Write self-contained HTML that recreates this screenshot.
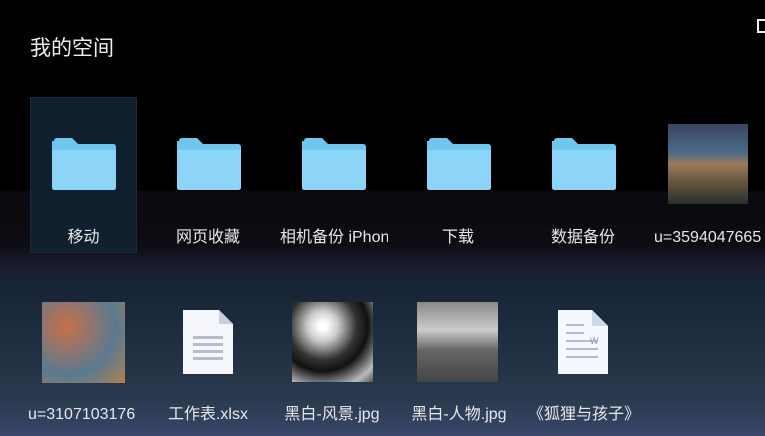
<!DOCTYPE html>
<html><head><meta charset="utf-8"><style>
body{margin:0;width:765px;height:436px;overflow:hidden;position:relative;font-family:"Liberation Sans","Noto Sans CJK SC",sans-serif;
background:linear-gradient(to bottom,#000 0px,#000 190px,#0a0a0f 192px,#0c0c12 245px,#1a1a2c 262px,#172436 285px,#1b2a3c 320px,#243446 370px,#2a3a4e 400px,#38466a 436px);}
.t{position:absolute;left:30px;top:32px;font-size:21px;color:#eee;}
.sel{position:absolute;left:30px;top:97px;width:107px;height:156px;background:#11202f;border:1px solid #1c2a38;box-sizing:border-box;}
.lbl{position:absolute;font-size:16px;color:#e8e8e8;white-space:nowrap;overflow:hidden;text-align:center;}
.f{position:absolute;width:64px;height:52px;}
.img{position:absolute;}
</style></head><body>
<div class="t">我的空间</div>
<div style="position:absolute;left:757px;top:19px;width:10px;height:14px;border:2px solid #eee;box-sizing:border-box"></div>
<div class="sel"></div>
<svg width="0" height="0" style="position:absolute"><defs>
<symbol id="fd" viewBox="0 0 64 52"><path d="M2 3 Q2 0 5 0 H20 L26 6 H61 Q64 6 64 9 V49 Q64 52 61 52 H3 Q0 52 0 49 V3Z" fill="#6fc6ef"/><path d="M0 12 H64 V49 Q64 52 61 52 H3 Q0 52 0 49Z" fill="#8dd5f8"/></symbol>
</defs></svg>
<svg class="f" style="left:52px;top:138px"><use href="#fd"/></svg>
<svg class="f" style="left:177px;top:138px"><use href="#fd"/></svg>
<svg class="f" style="left:302px;top:138px"><use href="#fd"/></svg>
<svg class="f" style="left:427px;top:138px"><use href="#fd"/></svg>
<svg class="f" style="left:552px;top:138px"><use href="#fd"/></svg>
<div class="img" style="left:668px;top:124px;width:80px;height:80px;background:linear-gradient(#3a4560 0%,#4a6a88 35%,#9a7a5a 50%,#6a5a40 70%,#2a2e30 100%)"></div>
<div class="lbl" style="left:30px;top:223px;width:107px">移动</div>
<div class="lbl" style="left:158px;top:223px;width:100px">网页收藏</div>
<div class="lbl" style="left:280px;top:223px;width:108px;text-align:left">相机备份 iPhone</div>
<div class="lbl" style="left:408px;top:223px;width:100px">下载</div>
<div class="lbl" style="left:533px;top:223px;width:100px">数据备份</div>
<div class="lbl" style="left:654px;top:229px;width:111px;text-align:left">u=3594047665</div>

<div class="img" style="left:42px;top:302px;width:83px;height:81px;background:radial-gradient(circle at 30% 30%,#c8704a,#5a7a90 60%,#b08050)"></div>
<svg class="img" style="left:183px;top:310px" width="50" height="64"><path d="M0 0H36L50 14V64H0Z" fill="#f4f6fb"/><path d="M36 0V14H50Z" fill="#c8d0e0"/><g fill="#b8bcc8"><rect x="10" y="26" width="30" height="3"/><rect x="10" y="33" width="30" height="3"/><rect x="10" y="40" width="30" height="3"/><rect x="10" y="47" width="30" height="3"/></g></svg>
<div class="img" style="left:292px;top:302px;width:81px;height:80px;background:radial-gradient(circle at 38% 30%,#fff 5%,#ccc 20%,#333 45%,#111 60%,#bbb 85%,#555)"></div>
<div class="img" style="left:417px;top:302px;width:81px;height:80px;background:linear-gradient(#888,#ccc 35%,#666 60%,#444)"></div>
<svg class="img" style="left:558px;top:310px" width="50" height="64"><path d="M0 0H34L50 16V64H0Z" fill="#f4f8ff"/><path d="M34 0V16H50Z" fill="#cdd8ec"/><g fill="#bbbbc4"><rect x="8" y="14" width="18" height="2"/><rect x="8" y="22" width="18" height="2"/><rect x="8" y="30" width="32" height="2"/><rect x="8" y="38" width="32" height="2"/><rect x="8" y="46" width="32" height="2"/></g><text x="32" y="34" font-size="9" fill="#9a8ad8" font-family="Liberation Sans">W</text></svg>
<div class="lbl" style="left:28px;top:406px;width:111px;text-align:left">u=3107103176</div>
<div class="lbl" style="left:158px;top:400px;width:100px">工作表.xlsx</div>
<div class="lbl" style="left:282px;top:400px;width:100px">黑白-风景.jpg</div>
<div class="lbl" style="left:406px;top:400px;width:106px">黑白-人物.jpg</div>
<div class="lbl" style="left:526px;top:400px;width:116px">《狐狸与孩子》</div>
</body></html>
